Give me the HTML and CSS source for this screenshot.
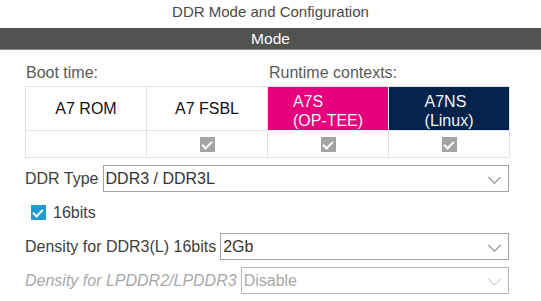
FILE: index.html
```html
<!DOCTYPE html>
<html lang="en">
<head>
  <meta charset="UTF-8" />
  <title>DDR Mode and Configuration</title>
  <link rel="stylesheet" href="styles.css">
</head>
<body>

  <h1 class="title">DDR Mode and Configuration</h1>
  <div class="bar">Mode</div>

  <div class="panel">
    <div class="ctx-labels">
      <span>Boot time:</span>
      <span>Runtime contexts:</span>
    </div>

    <div class="ctx-table">
      <div class="cell head">A7 ROM</div>
      <div class="cell head">A7 FSBL</div>
      <div class="cell head secure"><span>A7S<br>(OP-TEE)</span></div>
      <div class="cell head nonsecure"><span>A7NS<br>(Linux)</span></div>

      <div class="cell"></div>
      <div class="cell"><span class="tick"></span></div>
      <div class="cell"><span class="tick"></span></div>
      <div class="cell"><span class="tick"></span></div>
    </div>

    <!-- settings -->
    <div class="row first">
      <label>DDR Type</label>
      <div class="select">DDR3 / DDR3L<span class="chev"></span></div>
    </div>

    <div class="row check-row">
      <span class="check"></span>
      <label>16bits</label>
    </div>

    <div class="row">
      <label>Density for DDR3(L) 16bits</label>
      <div class="select">2Gb<span class="chev"></span></div>
    </div>

    <div class="row disabled">
      <label>Density for LPDDR2/LPDDR3</label>
      <div class="select">Disable<span class="chev"></span></div>
    </div>
  </div>

</body>
</html>
```
FILE: styles.css
```css
:root {
  --bar: #515351;
  --pink: #e6007e;
  --navy: #03234b;
  --grid: #dfe2e6;
  --text: #3e3e3e;
  --muted: #5a5a5a;
  --field-border: #a3a3a3;
}
* {
  box-sizing: border-box;
}
body {
  margin: 0;
  width: 541px;
  background: #fff;
  color: var(--text);
  font-family: "Liberation Sans", Arial, sans-serif;
  font-size: 16px;
}
.title {
  margin: 0;
  height: 28px;
  line-height: 24px;
  text-align: center;
  font-size: 15px;
  font-weight: 400;
  color: #4a4a4a;
}
.bar {
  height: 22px;
  line-height: 22px;
  background: var(--bar);
  border-bottom: 1px solid #8a8c8a;
  color: #fff;
  text-align: center;
  font-size: 15.5px;
}
.panel {
  padding: 0 32px 0 25px;
}
.ctx-labels {
  display: grid;
  grid-template-columns: 242px 242px;
  height: 36px;
  padding-top: 14px;
  padding-left: 1px;
  color: var(--muted);
}
.ctx-labels span + span {
  padding-left: 1px;
}
.ctx-table {
  display: grid;
  grid-template-columns: repeat(4, 121px);
  grid-template-rows: 44px 27px;
  border-top: 1px solid var(--grid);
  border-left: 1px solid var(--grid);
}
.cell {
  display: flex;
  align-items: center;
  justify-content: center;
  border-right: 1px solid var(--grid);
  border-bottom: 1px solid var(--grid);
}
.cell.head {
  color: #111;
}
.secure,
.nonsecure {
  align-items: flex-end;
  color: #f4f4f4 !important;
  line-height: 19px;
}
.secure span,
.nonsecure span {
  display: inline-block;
  text-align: left;
}
.secure {
  background: var(--pink);
}
.nonsecure {
  background: var(--navy);
}
.tick {
  width: 15px;
  height: 15px;
  background: #a2a4a6;
  position: relative;
}
.tick::after,
.check::after {
  content: "";
  position: absolute;
  left: 4px;
  top: 2px;
  width: 4px;
  height: 8px;
  border: solid #fff;
  border-width: 0 2px 2px 0;
  transform: rotate(45deg);
}
.row {
  display: flex;
  align-items: center;
  height: 27px;
  margin-bottom: 7px;
}
.row.first {
  margin-top: 7px;
  margin-bottom: 13px;
}
.row label {
  margin-right: 4px;
  white-space: nowrap;
}
.select {
  flex: 1;
  height: 27px;
  padding-left: 2px;
  line-height: 25px;
  color: #333;
  border: 1px solid var(--field-border);
  position: relative;
}
.chev {
  position: absolute;
  right: 9px;
  top: 7px;
  width: 9px;
  height: 9px;
  border: solid #777;
  border-width: 0 1px 1px 0;
  transform: rotate(45deg);
}
.check-row {
  height: 15px;
  margin-bottom: 13px;
  padding-left: 6px;
}
.check {
  width: 15px;
  height: 15px;
  background: #1e9bd7;
  position: relative;
  margin-right: 7px;
}
.disabled label {
  font-style: italic;
  color: #a8a8a8;
}
.disabled .select {
  color: #a8a8a8;
  border-color: #b5b5b5;
}
.disabled .chev {
  border-color: #c8c8c8;
}
```
